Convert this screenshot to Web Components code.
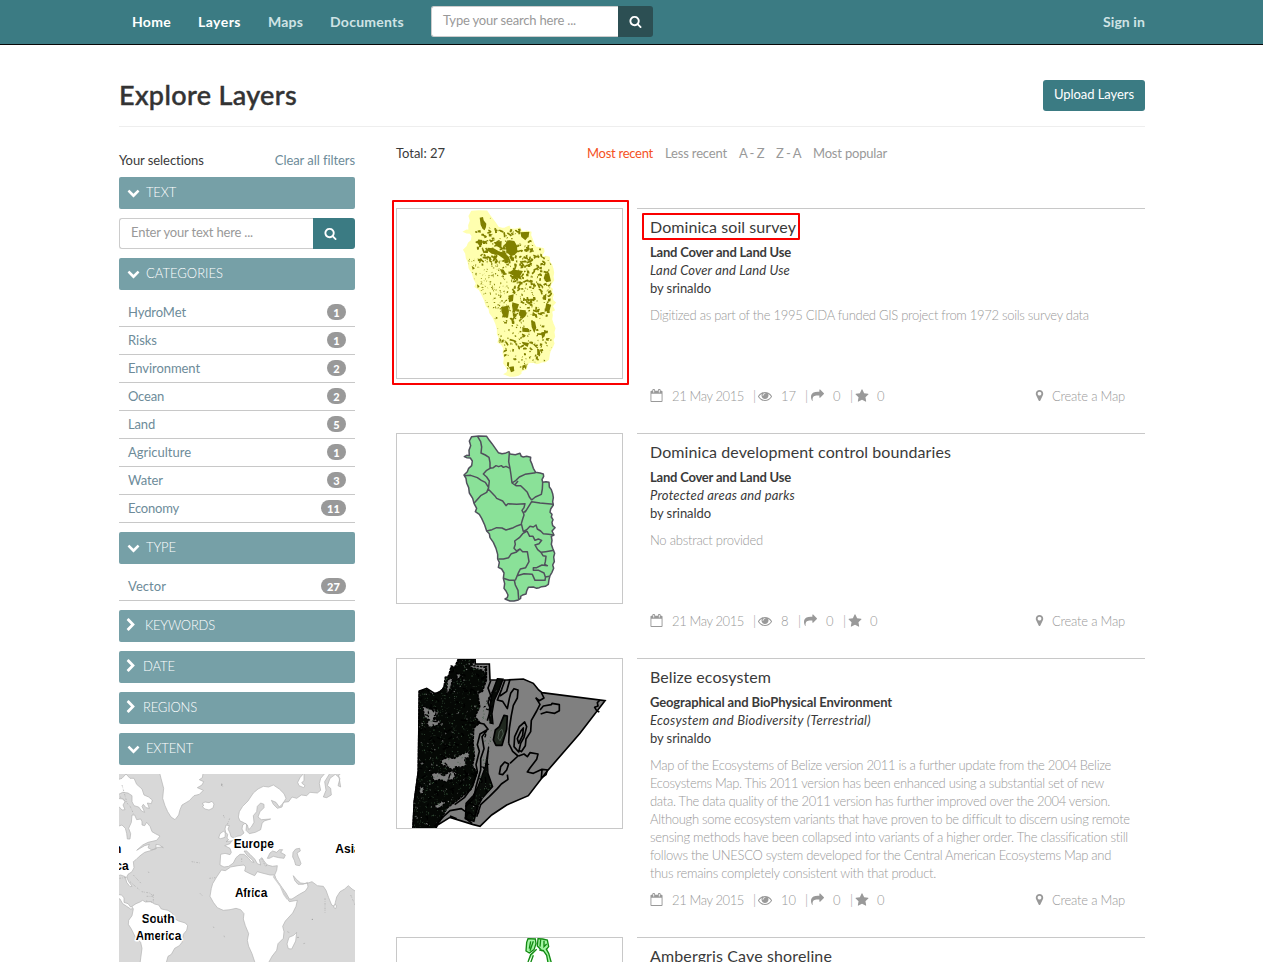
<!DOCTYPE html>
<html lang="en">
<head>
<meta charset="utf-8">
<title>Explore Layers</title>
<style>
html,body{margin:0;background:#fff}
body{height:962px;overflow:hidden;font:13px/18px Lato,"Open Sans",sans-serif;color:#3a3a3a}
</style>
</head>
<body>
<layers-app></layers-app>
<script>
const define = (name, render, after) => customElements.define(name, class extends HTMLElement {
  connectedCallback() {
    if (this.shadowRoot) return;
    this.attachShadow({mode: 'open'}).innerHTML = render(this);
    if (after) after(this);
  }
});
const F = (w, t) => `<fit-text w="${w}">${t}</fit-text>`;

const ICONS = {
  search: 'M1216 832q0-185-131.5-316.5t-316.5-131.5-316.5 131.5-131.5 316.5 131.5 316.5 316.5 131.5 316.5-131.5 131.5-316.5zm512 832q0 52-38 90t-90 38q-54 0-90-38l-343-342q-179 124-399 124-143 0-273.5-55.5t-225-150-150-225-55.5-273.5 55.5-273.5 150-225 225-150 273.5-55.5 273.5 55.5 225 150 150 225 55.5 273.5q0 220-124 399l343 343q37 37 37 90z',
  down: 'M1683 808l-742 741q-19 19-45 19t-45-19l-742-741q-19-19-19-45.5t19-45.5l166-165q19-19 45-19t45 19l531 531 531-531q19-19 45-19t45 19l166 165q19 19 19 45.5t-19 45.5z',
  right: 'M1363 877l-742 742q-19 19-45 19t-45-19l-166-166q-19-19-19-45t19-45l531-531-531-531q-19-19-19-45t19-45l166-166q19-19 45-19t45 19l742 742q19 19 19 45t-19 45z',
  star: 'M1728 647q0 22-26 48l-363 354 86 500q1 7 1 20 0 21-10.5 35.5t-30.5 14.5q-19 0-40-12l-449-236-449 236q-22 12-40 12-21 0-31.5-14.5t-10.5-35.5q0-6 2-20l86-500-364-354q-25-27-25-48 0-37 56-46l502-73 225-455q19-41 49-41t49 41l225 455 502 73q56 9 56 46z',
  pin: 'M1152 640q0-106-75-181t-181-75-181 75-75 181 75 181 181 75 181-75 75-181zm256 0q0 109-33 179l-364 774q-16 33-47.5 52t-67.5 19-67.5-19-46.5-52l-365-774q-33-70-33-179 0-212 150-362t362-150 362 150 150 362z',
  eye: 'M1664 960q-152-236-381-353 61 104 61 225 0 185-131.5 316.5t-316.5 131.5-316.5-131.5-131.5-316.5q0-121 61-225-229 117-381 353 133 205 333.5 326.5t434.5 121.5 434.5-121.5 333.5-326.5zm-720-384q0-20-14-34t-34-14q-125 0-214.5 89.5t-89.5 214.5q0 20 14 34t34 14 34-14 14-34q0-86 61-147t147-61q20 0 34-14t14-34zm848 384q0 34-20 69-140 230-376.5 368.5t-499.5 138.5-499.5-139-376.5-368q-20-35-20-69t20-69q140-229 376.5-368t499.5-139 499.5 139 376.5 368q20 35 20 69z',
  share: 'M1792 640q0 26-19 45l-512 512q-19 19-45 19t-45-19-19-45v-256h-224q-98 0-175.5 6t-154 21.5-133 42.5-105.5 69.5-80 101-48.5 138.5-17.5 181q0 55 5 123 0 6 2.5 23.5t2.5 26.5q0 15-8.5 25t-23.5 10q-16 0-28-17-7-9-13-22t-13.5-30-10.5-24q-127-285-127-451 0-199 53-333 162-403 875-403h224v-256q0-26 19-45t45-19 45 19l512 512q19 19 19 45z',
  calendar: 'M192 1664h1408v-1024h-1408zM576 448v-288q0-32-32-32h-64q-32 0-32 32v288q0 32 32 32h64q32 0 32-32zM1344 448v-288q0-32-32-32h-64q-32 0-32 32v288q0 32 32 32h64q32 0 32-32zM1728 384v1280q0 128-128 128h-1408q-128 0-128-128v-1280q0-128 128-128h128v-96q0-160 160-160h64q160 0 160 160v96h384v-96q0-160 160-160h64q160 0 160 160v96h128q128 0 128 128z'
};
define('fa-icon', el => {
  const s = el.getAttribute('size') || 14;
  return `<style>:host{display:block;flex:none;line-height:0}svg{width:${s}px;height:${s}px;fill:currentColor;fill-rule:evenodd;display:block}</style>
  <svg viewBox="0 0 1792 1792"><path d="${ICONS[el.getAttribute('name')]}"/></svg>`;
});

define('search-box', el => `<style>
:host{display:flex;height:31px}
.in{box-sizing:border-box;flex:1;border:1px solid #ccc;border-right:0;border-radius:3px 0 0 3px;background:#fff;color:#999;padding:4px 0 0 11px}
.btn{width:${el.getAttribute('btn')}px;background:${el.getAttribute('tone')};border-radius:0 3px 3px 0;color:#fff;display:flex;align-items:center;padding-left:${el.getAttribute('pad')}px;box-sizing:border-box}
</style><div class="in"><slot></slot></div><div class="btn"><fa-icon name="search" size="13"></fa-icon></div>`);

define('app-header', () => `<style>
:host{display:block;height:44px;background:#3b7b83;border-bottom:1px solid #080808}
.row{width:1026px;margin-left:119px;height:44px;display:flex;align-items:center;font-size:14px;font-weight:700;color:#cfe3e5;box-sizing:border-box;padding-left:13px}
.row>fit-text{margin-right:27px}
.on{color:#fff}
search-box{width:222px;font-size:13px;font-weight:400;margin-bottom:1px}
.row>.sign{margin:0 0 0 auto}
</style><div class="row"><fit-text class="on" w="39">Home</fit-text><fit-text class="on" w="43">Layers</fit-text>${F(35,'Maps')}${F(74,'Documents')}
<search-box btn="35" pad="11" tone="#2c4f53">${F(133,'Type your search here ...')}</search-box>
<fit-text class="sign" w="42">Sign in</fit-text></div>`);

define('page-title', () => `<style>
:host{display:flex;justify-content:space-between;align-items:flex-start;height:82px;padding-top:35px;box-sizing:border-box;border-bottom:1px solid #eee}
.t{font-size:27px;line-height:32px;font-weight:500;color:#333;-webkit-text-stroke:.45px #333;margin-top:-1px}
.b{height:31px;width:102px;box-sizing:border-box;border-radius:3px;background:#3b7b83;color:#fff;padding:5px 0 0 11px;font-size:13px}
</style><div class="t">${F(178,'Explore Layers')}</div><div class="b">${F(80,'Upload Layers')}</div>`);

define('filter-head', el => {
  const shut = el.hasAttribute('shut');
  return `<style>
:host{display:flex;height:32px;background:#76a0a7;border-radius:2px;color:#fff;align-items:center;padding:0 0 2px 8px;box-sizing:border-box;font-size:13px;font-weight:300}
.i{width:${el.getAttribute('ix')}px;padding-top:${shut?0:1}px;margin-left:${shut?'-3px':'0'}}
.l{margin-top:-1px}
</style><div class="i"><fa-icon name="${shut?'right':'down'}" size="${shut?14:13}"></fa-icon></div><div class="l"><slot></slot></div>`;
});

define('filter-item', el => `<style>
:host{display:flex;height:28px;box-sizing:border-box;border-bottom:1px solid #c8c8c8;align-items:center;justify-content:space-between;padding:0 9px 2px;color:#6d8b99}
b{background:#999;color:#fff;border-radius:8px;height:16px;width:${el.getAttribute('n').length>1?25:19}px;text-align:center;font:900 11px/18px Lato,sans-serif}
</style><slot></slot><b>${el.getAttribute('n')}</b>`);

define('extent-map', () => `<style>:host{display:block;height:188px}svg{display:block;width:236px;height:188px}
.land{fill:#fff;stroke:#b0b0b0;stroke-width:2;stroke-linejoin:round}.sea{fill:#d8d8d8;stroke:#b0b0b0;stroke-width:2}
.r{fill:none;stroke:#aaa;stroke-width:2;stroke-dasharray:5 3 2 4}
text{font:bold 36px "Liberation Sans",Arial,sans-serif;fill:#000;stroke:#fff;stroke-width:9px;stroke-linejoin:round;paint-order:stroke}</style>
<svg viewBox="27 27 708 564"><rect x="27" y="27" width="708" height="564" fill="#d8d8d8"/>
<g class="land">
<path d="M148 20L153 40 161 70 158 100 165 122 173 140 183 156 195 164 206 150 210 134 216 120 238 107 252 92 268 88 280 76 262 68 276 60 281 50 268 44 277 38 280 20Z"/>
<path d="M276 116l9-5 12 2 9-4 6 8-3 12-12 6-12-3-8-7 5-4z"/>
<path d="M20 45L36 40 48 27 60 40 72 40 80 58 96 72 102 90 116 96 127 105 124 116 112 114 118 130 108 128 100 118 96 124 104 142 95 138 86 126 72 122 66 110 66 92 54 84 38 82 22 90Z"/>
<path d="M20 100l20 2 5 8-6 10 6 14-9 1-9-10-7-2z"/>
<path d="M66 150L74 150 80 164 92 162 96 170 96 180 104 182 110 172 120 184 126 200 136 206 150 213 140 226 114 232 98 240 80 256 104 242 118 238 114 248 124 254 138 252 138 238 148 240 160 248 156 246 142 247 130 254 118 258 104 262 88 274 78 284 70 290 72 308 66 320 54 328 50 336 56 350 66 364 60 365 50 352 46 335 32 330 20 333V185L36 180 46 190 50 205 52 222 60 222 62 206 56 190 64 172Z"/>
<path d="M20 388L34 390 42 398 42 412 54 416 62 426 72 424 76 430 62 432 50 424 38 416 30 402 20 398Z"/>
<path d="M90 411L98 406 106 411 122 410 134 417 146 420 154 432 174 436 188 446 192 460 206 468 226 474 233 482 230 496 220 508 216 532 208 542 194 550 184 568 174 574 168 596H90L96 550 92 532 76 516 64 492 55 478 56 466 66 452 70 432 66 424 78 416Z"/>
<path d="M332 268L345 265 360 269 364 262 360 250 344 242 360 236 366 226 380 214 392 212 402 204 396 192 398 180 404 176 400 172 390 168 385 156 388 140 398 124 414 108 422 96 430 84 444 72 460 64 476 66 490 60 508 72 522 86 528 100 520 114 508 126 498 112 484 106 490 118 502 130 516 126 520 112 536 110 546 96 560 100 574 90 590 92 600 82 622 84 632 76 628 56 632 40 644 26 660 24 644 50 648 76 640 96 650 98 664 90 662 70 652 62 660 40 676 28 690 40 684 62 692 66 686 30 700 20H745V384L726 372 715 362 704 372 690 380 680 396 676 412 674 424 665 420 656 398 648 376 640 364 622 362 606 350 588 356 572 354 560 344 550 332 554 346 564 358 580 358 592 352 594 366 586 378 568 388 546 402 538 402 528 384 512 362 498 342 494 330 500 316 502 302 488 304 472 300 462 288 456 278 448 284 452 300 442 296 434 282 420 268 410 258 402 258 412 272 426 284 432 292 424 290 414 278 402 268 390 268 378 278 370 294 356 304 342 306 330 300Z"/>
<path d="M334 315L346 317 362 306 384 302 402 300 407 306 404 318 420 326 434 332 442 320 456 324 480 330 492 330 500 346 512 364 520 382 530 398 538 410 562 406 558 424 548 444 526 468 518 484 522 500 520 520 504 536 500 556 486 574 474 596H436L426 566 416 544 412 526 416 506 406 482 400 462 402 446 392 434 378 430 360 434 340 436 322 428 310 412 300 394 304 370 308 356 320 336Z"/>
<path d="M560 502l-3 26-12 24-10-1-4-14 6-20 14-6z"/>
<path d="M348 180l10 2-4 10 6 12 3 11 9 4-2 8-22 3 8-6-5-4 2-12-6-6-2-10zM330 206l10-7 6 4-1 14-13 4-6-2zM570 38l12-14 0 22-7 8 10 8-4 6-14-6-4-10zM674 418l6 4-3 9-6-4z"/>
</g>
<g class="sea"><path d="M404 174L410 178 408 196 418 206 436 202 452 194 456 176 462 168 482 162 454 164 444 156 450 140 462 128 462 118 452 114 442 124 440 140 430 152 432 172 424 186 416 194 412 180Z"/>
<path d="M472 280L480 264 488 258 500 262 508 254 518 254 512 262 526 270 522 280 506 278 490 274 478 280Z"/><path d="M549 262l8-10 12-2 2 8-10 6 4 12 4 8 4 12-4 6-12-2-4-14-5-10z"/></g>
<path d="M490 334L512 364 522 388 532 402" fill="none" stroke="#d0d0d0" stroke-width="5"/>
<path class="r" d="M28 340l24-3M60 350l16 14 12 10M95 380l24 4 12 10-22 0M130 388l0 24-22-4M245 290l26 4M298 340l18-2M270 385l8 8M335 55l4 12M340 150l4 10M352 178l8-20M70 330l24 26M30 95l30 28 10 22M36 60l14 50M455 281l12 24 6-8M395 280l0 14M532 500l8 4M580 536l8-2M645 400l0 44M722 390l14 32M310 485l2 4M342 512l2 6M115 320l2 4"/>
<g fill="#999"><circle cx="335" cy="60" r="2"/><circle cx="564" cy="517" r="2"/><circle cx="607" cy="463" r="2"/></g>
<text x="371" y="250" textLength="121">Europe</text><text x="375" y="396" textLength="97">Africa</text><text x="95" y="473" textLength="99">South</text><text x="77" y="524" textLength="137">America</text><text x="676" y="264">Asia</text><text x="12" y="264">h</text><text x="16" y="315">ca</text>
</svg>`);

const CATS = [['HydroMet',1,58],['Risks',1,29],['Environment',2,72],['Ocean',2,36],['Land',5,27],['Agriculture',1,63],['Water',3,35],['Economy',11,51]];
define('filter-panel', () => `<style>
:host{display:flex;flex-direction:column;gap:9px;width:236px;padding-top:24px}
.top{display:flex;justify-content:space-between;margin-bottom:-1px}.clear{color:#6d8b99}
</style>
<div class="top">${F(85,'Your selections')}<span class="clear">${F(80,'Clear all filters')}</span></div>
<filter-head ix="19">${F(30,'TEXT')}</filter-head>
<search-box btn="42" pad="11" tone="#3b7b83">${F(122,'Enter your text here ...')}</search-box>
<filter-head ix="19">${F(77,'CATEGORIES')}</filter-head>
<div>${CATS.map(c=>`<filter-item n="${c[1]}">${F(c[2],c[0])}</filter-item>`).join('')}</div>
<filter-head ix="19">${F(30,'TYPE')}</filter-head>
<filter-item n="27">${F(38,'Vector')}</filter-item>
<filter-head shut ix="21">${F(70,'KEYWORDS')}</filter-head>
<filter-head shut ix="19">${F(32,'DATE')}</filter-head>
<filter-head shut ix="19">${F(54,'REGIONS')}</filter-head>
<filter-head ix="19">${F(47,'EXTENT')}</filter-head>
<extent-map></extent-map>`);

/* Map thumbnails */
const ISLAND = 'M245 35L266 33 290 34 298 46 306 56 316 70 325 83 336 86 345 85 357 80 360 87 376 89 390 85 394 94 400 96 410 94 422 97 421 106 425 115 430 130 437 142 450 144 460 147 461 154 456 164 458 172 468 170 477 172 478 186 484 194 488 206 490 218 488 230 490 240 482 252 480 262 486 268 484 276 489 284 486 292 488 302 495 308 486 318 492 330 484 334 486 346 484 358 488 370 494 385 491 396 493 410 488 420 491 430 486 442 480 452 477 464 475 478 466 484 455 485 448 488 440 490 430 486 415 487 410 498 408 507 398 510 392 514 392 520 385 525 372 528 360 528 345 522 352 518 354 510 348 498 342 490 344 476 340 460 342 444 335 432 325 427 328 412 323 402 323 388 318 370 310 352 300 338 298 326 290 318 284 300 275 280 268 268 256 260 260 250 252 235 248 220 238 204 236 188 230 174 228 160 222 150 232 140 236 130 245 122 247 108 241 99 230 98 223 95 230 91 238 92 237 76 242 62 238 48Z';
const rng = s => () => (s = (s * 16807) % 2147483647) / 2147483647;
function specks(n, seed, x, y, w, h, min, max) {
  const r = rng(seed); let d = '';
  for (let i = 0; i < n; i++) {
    const a = x + r() * w, b = y + r() * h, s = min + r() * (max - min), t = min + r() * (max - min);
    d += `M${a.toFixed(1)} ${b.toFixed(1)}l${s.toFixed(1)} ${(r()*4-2).toFixed(1)} ${(r()*4-2).toFixed(1)} ${t.toFixed(1)} ${(-s).toFixed(1)} ${(r()*4-2).toFixed(1)}z`;
  }
  return d;
}
function arcs(n, seed, x, y, w, h) {
  const r = rng(seed); let d = '';
  for (let i = 0; i < n; i++) d += `M${(x+r()*w).toFixed(0)} ${(y+r()*h).toFixed(0)}q${(r()*20-4).toFixed(0)} ${(r()*16-8).toFixed(0)} ${(r()*26-13).toFixed(0)} ${(r()*26-10).toFixed(0)}`;
  return d;
}
const THUMBS = {
soil: () => `<clipPath id="c"><path d="${ISLAND}"/></clipPath><path d="${ISLAND}" fill="#ffffaf" stroke="#ffffaf" stroke-width="5"/>
<g clip-path="url(#c)"><g transform="translate(-15 -15)" fill="#808000"><path d="${specks(190,77,235,190,130,150,1,4)}${specks(320,91,310,60,190,460,2,5)}${specks(60,31,270,100,170,110,4,9)}${specks(50,9,370,200,125,160,4,9)}${specks(22,19,350,350,140,170,5,10)}"/>
<path d="${arcs(50,313,290,100,150,105)}${arcs(50,517,370,170,120,210)}${arcs(15,711,360,380,120,120)}" fill="none" stroke="#808000" stroke-width="5"/>
<path d="M364 140l10-4 14 2 8 14 1 18-8 10-12 4-12-14-4-16zM308 158l18 2 18 10 14 2 14 14 4 12-16-4-20-14-20-4-14-10zM284 68l10-2 2 10 8 10-1 10-4 10-6-4-6-12zM406 112l27-2-2 14-10 12-12-10zM326 142l24-4-1 22-14-6zM480 236l12-3 6 26-14 3-8-12zM370 302l16-4-2 20-12 4zM348 336l20-4 4 16-3 20-13-2-6-14zM382 322l20 6-6 18-12 4-3-18zM404 344l18 2 2 14-12 12-10-12zM484 324l14 6-6 24-12-10zM384 224l16 2 14 2-8 14 4 12-14-6-18 6 8-12-16-8zM344 222l12 2 8 14-8 3zM412 396l20 6 2 10-22-2zM438 376l12 4 4 18-6 16-8-18zM410 440l22 4-4 12-14-8zM372 516l14-2 2 14-10 4zM275 138l16-4 0 16-10 0zM456 460l8 4 2 16-9-2zM470 412l12-2-3 14-8 8zM260 212l10 8-7 4zM276 268l8 6-6 6zM343 428l6 6-4 8zM412 512l10-4 0 8-10 6z"/></g></g>`,
parishes: () => `<g stroke="#50505c" stroke-width="4.5" stroke-linejoin="round" fill="none"><path d="${ISLAND}" fill="#8ae198"/>
<path d="M263 35L272 50 275 66 273 84 286 90 297 97 300 113 300 130 290 136 280 147 290 156 298 168 295 193M300 130L310 128 318 122 326 125 334 122 340 127 348 124 360 130 363 150 366 174 378 182 392 182 400 190 412 202 418 216 425 225M358 84L356 110 360 130M366 174L378 166 388 156 405 148 437 143M376 178L384 168M224 152L242 151 262 158 274 166 286 172 296 188 290 202 272 212 252 235M295 193L304 202 314 212 320 220 338 228 348 242 354 236 380 238 405 236 402 248 396 256 400 264 410 254 425 230 450 234 490 238M425 225L436 216 454 208 457 192 458 172M400 262L402 270 398 282 394 296 400 320M395 298L382 302 370 308 348 315 336 309 320 308 306 314 290 318M425 230L405 262M399 320L410 314 420 304 430 306 438 300 442 312 452 318 460 326 476 328 490 330M411 318L398 326 388 338 374 348 376 358 372 370 380 378 390 372 398 380 412 380 415 398 417 410 407 428 391 432 384 446 376 466M376 466L358 466 340 460M325 402L340 402 356 398 364 386 378 382 388 374M411 318L419 334 429 334 435 346 445 342 455 346 447 356 435 360 443 374 453 382 467 380 492 376M453 382L459 392 468 394 466 410 464 418 472 422 456 420 440 428 430 428 430 436 446 436 462 444 466 456 478 454M467 454L465 466 435 466 427 448 402 446 382 452M373 466L376 480 384 496 386 522"/></g>`,
belize: () => {
  const dark = 'M205 28h50l-10 18 24 8 20-4 0 40-12 34-14 6 6 40-14 30 14 18-18 16-2 44 4 40-6 30 14 20-18 50-38 30-34 26-34 61H69l4-80 12-90 3-240 22-8 16 16 20-5 16-14 4-32 10-4 8-30 10 4z';
  return `<path d="M205 28h50l1 14h42l2 48h50l50-3 30 13 16 20 10 8 189 24-75 98-100 115-55 72-65 28-45 30-35 34-20-5-70-22-50 31H69l4-80 12-90 3-240 22-8 25 16 20-8 20-35 5-12 25-20z" fill="#808080" stroke="#000" stroke-width="5"/>
<clipPath id="d"><path d="${dark}M322 88l16 0-14 40-14 36-8 50 4 50-6 40-2 60 10 40-26 40-26 80-22-4 12-80 20-40 12-100-2-120z"/></clipPath>
<path d="${dark}" fill="#050805" stroke="#000" stroke-width="5" stroke-dasharray="9 2"/>
<path d="M322 86l17 1-12 34-14 30-7 40 3 30-9-2-2-40 8-50zM296 290l-4 42 2 38 14 40-32 36-14 26-10 42-26-8 2-46 22-24 14-26 22-60z" fill="#080b08" stroke="#000" stroke-width="4"/>
<path d="M240 46l45 6 1 20-10-12-36-8zM98 168l18 8 30 10-8 14-10 6 24 8-10 12-24 6-8-12 8-10-14-8zM154 330l20-8 18 4 20-12 24-10 2 16-14 10 6 16-18 6-14-2-10 10-16-10-18-6zM124 370l24-2 12 10 20-14 20 4-10 20-24 8-14-8-20 6zM172 90l16-6-6 30-12 20zM130 470l26-16 12 2-20 20zM90 410l12 2-4 20-10-4zM88 340l14-4-4 10zM200 70l16 6-14 12z" fill="#808080" stroke="#000" stroke-width="4" stroke-dasharray="7 3"/>
<g clip-path="url(#d)"><path d="${specks(900,43,68,28,250,505,1.5,3)}" fill="#3c5a40"/><path d="${specks(180,83,68,28,250,505,1,4)}" fill="#808080"/><path d="${arcs(110,21,80,40,230,490)}" fill="none" stroke="#000" stroke-width="4"/></g>
<g fill="none" stroke="#000" stroke-width="5" stroke-linejoin="round"><path d="M262 218L282 222 294 238 270 252 262 284 268 304 258 344 262 364 248 408 224 442 194 464M290 242L276 260 282 296 272 326 272 360 258 410 252 444 226 470M302 92L294 114 302 136 294 158 302 178 292 212M345 90L335 118 322 150 338 154 352 176 358 146 362 130 372 116 384 120 382 144 370 166 364 196 358 236 356 280M360 88L350 124 330 138M388 230L404 216 410 230 402 262 392 280 386 306 372 290 374 260ZM392 244L400 234 398 256 386 280 382 266ZM437 143L448 152 462 144 454 128M437 143L450 163 440 183 424 211 422 245 408 267 406 287 394 305 386 300M450 180L460 168 484 164 486 160 508 164 508 182 494 190 470 186 452 192M386 318L402 312 412 320 420 308 444 312 440 328 420 354 412 366 430 370 456 358 474 360M456 360L454 384 468 374 472 360M630 150L622 158 624 168 614 172 620 182 628 186M356 280L368 304 384 318 360 340M332 350L344 336 356 342 350 360 338 374 328 372ZM352 374L354 388 334 402 322 416 298 440 272 464 260 500M240 460L264 470 254 500 236 486 226 504 246 520M130 533L160 500 180 482 214 476 234 490M180 498L200 506"/>
<path d="M342 196l10 2-2 40-14 48-18 0-8-16 6-30 12-10z" fill="#20281f"/><path d="M328 244l8-6 4 14-10 20-6-8z" stroke="#5c6c60" stroke-width="2"/></g>`;
},
shore: () => `<g transform="translate(0 -117)" fill="#a4f5a4" stroke="#128a12" stroke-width="4"><path d="M414 146l22 1 2 14-6 18-14 10-10-6 2-26zM444 146l14 1 14 3 4 20-8 10-12 2-14-14z"/><path d="M422 154l-4 22M430 154l-10 28M452 148l-2 22M462 152l0 18 8-8" /><path d="M440 178l-18 16-8 22M448 180l12 2 10 14 4 22 10 0-8-28-8-14M430 196l-8 22"/></g>`
};
define('layer-thumb', el => `<style>:host{display:block;width:225px;height:169px;border:1px solid #c8c8c8;overflow:hidden;position:relative}svg{display:block;width:225px;height:169px}</style>
<svg viewBox="21 27 675 507">${THUMBS[el.getAttribute('kind')]()}</svg>`);

define('meta-row', el => {
  const v = el.getAttribute('views');
  const item = (ic, n, w) => `<i>|</i><fa-icon name="${ic}" size="${ic==='share'?13:14}"></fa-icon><span class="n">${F(w, n)}</span>`;
  return `<style>
:host{display:flex;height:18px;align-items:center;color:#999;font-weight:300}
fa-icon{margin-top:-1px}
.d{margin-left:9px}i{font-style:normal;width:5px;margin-left:9px}fa-icon[name=star]{margin-right:-1px}fa-icon[name=share]{margin-left:1px}
.n{margin-left:9px}.c{margin-left:auto;display:flex;align-items:center;gap:6px;padding-right:20px}
</style><fa-icon name="calendar" size="13"></fa-icon><span class="d">${F(72,'21 May 2015')}</span>
${item('eye', v, v.length > 1 ? 15 : 8)}${item('share', 0, 8)}${item('star', 0, 8)}
<span class="c"><fa-icon name="pin" size="13"></fa-icon>${F(73,'Create a Map')}</span>`;
});

define('layer-card', () => `<style>
:host{display:flex;justify-content:space-between;position:relative}
.body{width:508px;box-sizing:border-box;border-top:1px solid #c8c8c8;padding:8px 0 28px 13px}
.t{font-size:16px;line-height:20px;color:#3a3a3a;margin-bottom:6px}
.k{font-weight:700}.s{font-style:italic}.a{margin:9px 0;min-height:72px;color:#999;font-weight:300}
:host([brief]) .body{height:25px;padding-bottom:0}
:host([brief]) .rest{display:none}
</style><slot name="thumb"></slot><div class="body"><div class="t"><slot name="title"></slot></div>
<div class="rest"><div class="k"><slot name="kind"></slot></div><div class="s"><slot name="sub"></slot></div><div><slot name="owner"></slot></div>
<div class="a"><slot name="abstract"></slot></div><slot name="meta"></slot></div></div>`);

define('red-mark', el => {
  const [x,y,w,h] = el.getAttribute('box').split(' ');
  return `<style>:host{position:absolute;left:${x}px;top:${y}px;width:${w}px;height:${h}px;border:2px solid #fa0000;box-sizing:border-box;border-radius:1px;pointer-events:none}</style>`;
});

const CARDS = [
 ['soil','Dominica soil survey',146,'Land Cover and Land Use',141,'Land Cover and Land Use',140,[['Digitized as part of the 1995 CIDA funded GIS project from 1972 soils survey data',439]],'17'],
 ['parishes','Dominica development control boundaries',301,'Land Cover and Land Use',141,'Protected areas and parks',145,[['No abstract provided',113]],'8'],
 ['belize','Belize ecosystem',121,'Geographical and BioPhysical Environment',242,'Ecosystem and Biodiversity (Terrestrial)',221,[
  ['Map of the Ecosystems of Belize version 2011 is a further update from the 2004 Belize',461],
  ['Ecosystems Map. This 2011 version has been enhanced using a substantial set of new',454],
  ['data. The data quality of the 2011 version has further improved over the 2004 version.',460],
  ['Although some ecosystem variants that have proven to be difficult to discern using remote',479],
  ['sensing methods have been collapsed into variants of a higher order. The classification still',478],
  ['follows the UNESCO system developed for the Central American Ecosystems Map and',461],
  ['thus remains completely consistent with that product.',286]],'10'],
 ['shore','Ambergris Caye shoreline',182]];
const card = (c, i) => c.length < 4
 ? `<layer-card brief><layer-thumb slot="thumb" kind="${c[0]}"></layer-thumb><fit-text slot="title" w="${c[2]}">${c[1]}</fit-text></layer-card>`
 : `<layer-card><layer-thumb slot="thumb" kind="${c[0]}"></layer-thumb><fit-text slot="title" w="${c[2]}">${c[1]}</fit-text><fit-text slot="kind" w="${c[4]}">${c[3]}</fit-text><fit-text slot="sub" w="${c[6]}">${c[5]}</fit-text><fit-text slot="owner" w="61">by srinaldo</fit-text>${c[7].map(l=>`<fit-text line slot="abstract" w="${l[1]}">${l[0]}</fit-text>`).join('')}<meta-row slot="meta" views="${c[8]}"></meta-row>${i?'':'<red-mark slot="thumb" box="-4 -8 237 185"></red-mark><red-mark slot="thumb" box="246 5 158 27"></red-mark>'}</layer-card>`;
define('layer-list', () => `<style>
:host{display:block;width:749px;height:835px;box-sizing:border-box;overflow:hidden;padding:17px 0 0 4px;margin-left:-4px;width:753px}
.sort{display:flex;height:18px;margin-bottom:46px;color:#999}
.sort fit-text{margin-right:12px}.sort .tot{color:#3a3a3a;margin-right:142px}.sort .on{color:#f5521e}
</style><div class="sort"><fit-text class="tot" w="49">Total: 27</fit-text><fit-text class="on" w="66">Most recent</fit-text>${F(62,'Less recent')}${F(25,'A - Z')}${F(25,'Z - A')}${F(74,'Most popular')}</div>
${CARDS.map(card).join('')}`);

define('layers-app', () => `<style>
:host{display:block;height:962px;overflow:hidden}
main{width:1026px;margin-left:119px}
.cols{display:flex;justify-content:space-between}
</style><app-header></app-header><main><page-title></page-title><div class="cols"><filter-panel></filter-panel><layer-list></layer-list></div></main>`);

/* A single line of text tracked to a given measure (w, in px). */
define('fit-text', () => `<style>:host{display:inline-block;white-space:pre;vertical-align:top}:host([line]){display:block;width:max-content}</style><slot></slot>`, el => {
  const w = +el.getAttribute('w');
  el.style.letterSpacing = ((w - el.getBoundingClientRect().width) / el.textContent.length).toFixed(3) + 'px';
});
</script>
</body>
</html>
